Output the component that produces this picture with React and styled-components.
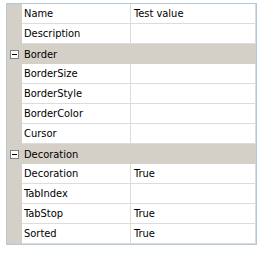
import React from 'react';
import styled, { createGlobalStyle } from 'styled-components';

const GlobalStyle = createGlobalStyle`
  html, body {
    margin: 0;
    padding: 0;
    background: #ffffff;
  }
  body {
    font-family: "DejaVu Sans Condensed", "DejaVu Sans", sans-serif;
    font-size: 11px;
    color: #000000;
  }
`;

const Page = styled.div`
  padding: 3px 0 0 6px;
`;

const Grid = styled.div`
  width: 249px;
  border: 1px solid #b4c8d6;
  display: flex;
  flex-direction: column;
  background: #ffffff;
`;

const Row = styled.div`
  display: grid;
  grid-template-columns: 15px 109px 1fr;
  height: 20px;
`;

const Margin = styled.div`
  background: #d4d0c8;
`;

const Cell = styled.div`
  display: flex;
  align-items: center;
  padding-left: ${({ value }) => (value ? '3px' : '2px')};
  border-bottom: 1px solid #dcdcdc;
  border-right: 1px solid #dcdcdc;
  white-space: nowrap;
  overflow: hidden;
`;

const CategoryRow = styled.div`
  display: flex;
  align-items: center;
  height: 20px;
  background: #d4d0c8;
`;

const ToggleBox = styled.div`
  width: 15px;
  display: flex;
  justify-content: center;
  align-items: center;
`;

const Minus = styled.span`
  width: 7px;
  height: 7px;
  border: 1px solid #808080;
  background: #ffffff;
  display: flex;
  align-items: center;
  justify-content: center;
  &::after {
    content: '';
    width: 5px;
    height: 1px;
    background: #000000;
  }
`;

const CategoryLabel = styled.span`
  padding-left: 2px;
`;

const data = [
  { type: 'prop', name: 'Name', value: 'Test value' },
  { type: 'prop', name: 'Description', value: '' },
  { type: 'cat', name: 'Border' },
  { type: 'prop', name: 'BorderSize', value: '' },
  { type: 'prop', name: 'BorderStyle', value: '' },
  { type: 'prop', name: 'BorderColor', value: '' },
  { type: 'prop', name: 'Cursor', value: '' },
  { type: 'cat', name: 'Decoration' },
  { type: 'prop', name: 'Decoration', value: 'True' },
  { type: 'prop', name: 'TabIndex', value: '' },
  { type: 'prop', name: 'TabStop', value: 'True' },
  { type: 'prop', name: 'Sorted', value: 'True' },
];

const App = () => (
  <Page>
    <GlobalStyle />
    <Grid>
      {data.map((item, i) => (
        item.type === 'cat' ? (
          <CategoryRow key={i}>
            <ToggleBox><Minus /></ToggleBox>
            <CategoryLabel>{item.name}</CategoryLabel>
          </CategoryRow>
        ) : (
          <Row key={i}>
            <Margin />
            <Cell>{item.name}</Cell>
            <Cell value>{item.value}</Cell>
          </Row>
        )
      ))}
    </Grid>
  </Page>
);

export default App;
